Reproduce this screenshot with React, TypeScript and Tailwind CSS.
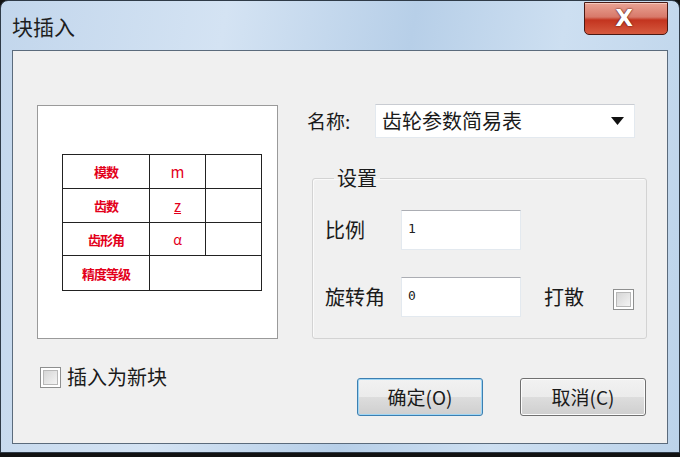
import React from 'react';

const cjk = "font-['Noto_Sans_CJK_SC','Noto_Sans',sans-serif]";

function Check({ className = '' }: { className?: string }) {
  return (
    <div className={`w-[21px] h-[21px] border border-[#8e8f8f] bg-white p-[2px] ${className}`}>
      <div className="w-full h-full border border-[#b8b8b8] bg-[linear-gradient(135deg,#d6d6d6,#f4f4f4)]" />
    </div>
  );
}

function Field({ value }: { value: string }) {
  return (
    <div className="w-[120px] h-[40px] bg-white border border-[#e3e9ef] border-t-[#abadb3] px-[6px] pt-[8px] font-['DejaVu_Sans_Mono',monospace] text-[13px] text-[#222]">
      {value}
    </div>
  );
}

function Preview() {
  const cell = 'border-[1.5px] border-[#222] text-[#e3001b] font-bold text-center align-middle';
  return (
    <div className="w-[241px] h-[234px] mt-[1px] bg-white border border-[#9a9a9a] flex flex-col items-start pl-[24px] pt-[48px]">
      <table className={`border-collapse ${cjk} text-[13px] leading-none`}>
        <tbody>
          <tr className="h-[34px]">
            <td className={`${cell} w-[87px] tracking-[-1px]`}>模数</td>
            <td className={`${cell} w-[56px] font-normal text-[15px]`}>m</td>
            <td className={`${cell} w-[56px]`} />
          </tr>
          <tr className="h-[34px]">
            <td className={`${cell} tracking-[-1px]`}>齿数</td>
            <td className={`${cell} font-normal text-[15px] underline`}>z</td>
            <td className={cell} />
          </tr>
          <tr className="h-[33px]">
            <td className={`${cell} tracking-[-1px]`}>齿形角</td>
            <td className={`${cell} font-normal text-[14px]`}>α</td>
            <td className={cell} />
          </tr>
          <tr className="h-[35px]">
            <td className={`${cell} tracking-[-1px]`}>精度等级</td>
            <td className={cell} colSpan={2} />
          </tr>
        </tbody>
      </table>
    </div>
  );
}

function Button({ label, primary }: { label: string; primary?: boolean }) {
  return (
    <button
      className={`w-[126px] h-[38px] rounded-[3px] border ${
        primary ? 'border-[#3c7fb1] shadow-[inset_0_0_0_1px_#9fd6f5]' : 'border-[#707070] shadow-[inset_0_0_0_1px_#fcfcfc]'
      } bg-[linear-gradient(#f2f2f2_0%,#ebebeb_50%,#dddddd_50%,#cfcfcf_100%)] text-[19px] text-[#1a1a1a] ${cjk}`}
    >
      {label}
    </button>
  );
}

export default function App() {
  return (
    <div className="w-[680px] h-[457px] bg-[#121212] overflow-hidden">
      <div className="w-[680px] h-[453px] rounded-t-[8px] border border-[#2f3b48] bg-[linear-gradient(100deg,#c2d6ec_0%,#d4e3f3_30%,#b7cfe8_55%,#cddff1_75%,#bcd3ea_100%)] flex flex-col px-[11px] pb-[8px]">
        <div className="h-[49px] flex items-start justify-between">
          <div className={`pt-[10px] text-[21px] text-[#1e1e1e] ${cjk}`}>块插入</div>
          <div className="mt-[1px] w-[84px] h-[33px] rounded-b-[5px] border border-[#4a1a14] bg-[linear-gradient(#e9a394_0%,#d8796a_45%,#c3341f_55%,#d65a3f_100%)] flex items-center justify-center pr-[4px] shadow-[inset_0_1px_0_#f6c8bc]">
            <span className="text-white text-[23px] font-bold font-['DejaVu_Sans',sans-serif] [text-shadow:0_0_2px_#5a1a10,0_0_1px_#5a1a10]">X</span>
          </div>
        </div>
        <div className="flex-1 border border-[#5b6b7c] bg-[#f0f0f0] flex flex-col pl-[24px] pt-[53px]">
          <div className="flex">
            <Preview />
            <div className="ml-[29px] flex flex-col">
              <div className="flex items-center">
                <div className={`w-[68px] text-[19px] text-[#1a1a1a] ${cjk}`}>名称:</div>
                <div className="w-[260px] h-[34px] bg-white border border-[#e3e9ef] border-t-[#c9ccd2] flex items-center justify-between pl-[6px] pr-[10px]">
                  <span className={`text-[20px] text-[#1a1a1a] ${cjk}`}>齿轮参数简易表</span>
                  <svg width="13" height="8" viewBox="0 0 13 8"><path d="M0 0h13L6.5 8z" fill="#111" /></svg>
                </div>
              </div>
              <fieldset className="mt-[27px] ml-[5px] w-[335px] h-[174px] border border-[#d3d3d3] rounded-[3px] pl-[12px] shadow-[inset_1px_1px_0_#fafafa]">
                <legend className={`ml-[9px] px-[3px] text-[20px] leading-[26px] text-[#1a1a1a] ${cjk}`}>设置</legend>
                <div className="mt-[19px] flex items-center">
                  <div className={`w-[76px] text-[20px] text-[#1a1a1a] ${cjk}`}>比例</div>
                  <Field value="1" />
                </div>
                <div className="mt-[27px] flex items-center">
                  <div className={`w-[76px] text-[20px] text-[#1a1a1a] ${cjk}`}>旋转角</div>
                  <Field value="0" />
                  <div className={`ml-[23px] text-[20px] text-[#1a1a1a] ${cjk}`}>打散</div>
                  <Check className="ml-[29px] mt-[4px]" />
                </div>
              </fieldset>
            </div>
          </div>
          <div className="flex items-start mt-[23px]">
            <div className="w-[317px] flex items-center ml-[3px]">
              <Check />
              <span className={`ml-[6px] text-[20px] text-[#1a1a1a] ${cjk}`}>插入为新块</span>
            </div>
            <div className="mt-[16px] flex gap-[37px]">
              <Button label="确定(O)" primary />
              <Button label="取消(C)" />
            </div>
          </div>
        </div>
      </div>
    </div>
  );
}
